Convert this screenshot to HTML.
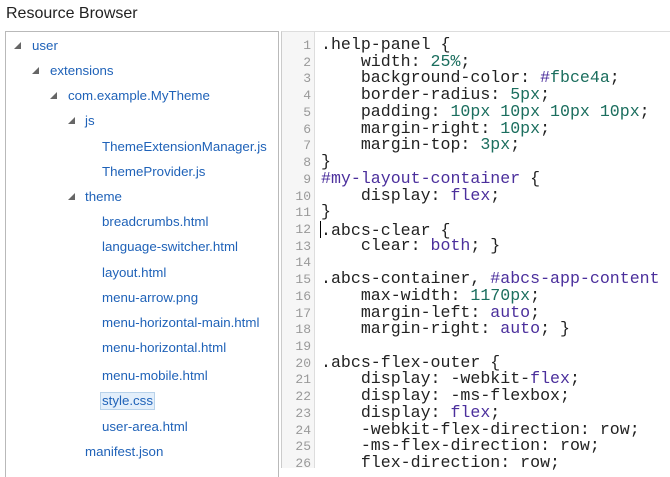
<!DOCTYPE html>
<html><head><style>
body{margin:0;width:670px;height:467px;overflow:hidden;background:#fff;font-family:"Liberation Sans",sans-serif;position:relative}
.title{position:absolute;left:6px;top:5px;font-size:16px;color:#222}
.tree{position:absolute;left:5px;top:31px;width:272px;height:445px;border:1px solid #b9b9b9;border-bottom:none}
.it{position:absolute;font-size:13.3px;color:#1f62b8;white-space:nowrap;line-height:16px}
.tri{position:absolute;width:0;height:0;border-left:7px solid transparent;border-bottom:7px solid #666}
.sel{background:#e3effb;border:1px solid #b8d2ea;padding:0 1px;margin-left:-2px}
.code{position:absolute;left:281px;top:31px;width:389px;height:436px;border-top:1px solid #ddd;border-left:1px solid #ccc;background:#fff}
.gut{position:absolute;left:0;top:0;width:32px;height:436px;background:#f6f6f6;border-right:1px solid #ddd}
.ln{position:absolute;left:0;width:29px;text-align:right;font-family:"Liberation Mono",monospace;font-size:13px;color:#999}
.cl{position:absolute;left:39px;font-family:"Liberation Mono",monospace;font-size:16.6px;color:#222;white-space:pre;line-height:16px}
.n{color:#1b6e5e}.p{color:#4b2f9c}
.cur{display:inline-block;width:1px;height:17px;background:#000;vertical-align:-3px;margin-left:-1px}
</style></head><body>
<div class="title">Resource Browser</div>
<div class="tree"></div>
<div class="tri" style="left:14px;top:42px"></div><div class="it" style="left:32px;top:38px">user</div>
<div class="tri" style="left:32px;top:67px"></div><div class="it" style="left:50px;top:63px">extensions</div>
<div class="tri" style="left:50px;top:92px"></div><div class="it" style="left:68px;top:88px">com.example.MyTheme</div>
<div class="tri" style="left:68px;top:117px"></div><div class="it" style="left:85px;top:113px">js</div>
<div class="it" style="left:102px;top:139px">ThemeExtensionManager.js</div>
<div class="it" style="left:102px;top:164px">ThemeProvider.js</div>
<div class="tri" style="left:68px;top:193px"></div><div class="it" style="left:85px;top:189px">theme</div>
<div class="it" style="left:102px;top:214px">breadcrumbs.html</div>
<div class="it" style="left:102px;top:239px">language-switcher.html</div>
<div class="it" style="left:102px;top:265px">layout.html</div>
<div class="it" style="left:102px;top:290px">menu-arrow.png</div>
<div class="it" style="left:102px;top:315px">menu-horizontal-main.html</div>
<div class="it" style="left:102px;top:340px">menu-horizontal.html</div>
<div class="it" style="left:102px;top:368px">menu-mobile.html</div>
<div class="it sel" style="left:102px;top:392px">style.css</div>
<div class="it" style="left:102px;top:419px">user-area.html</div>
<div class="it" style="left:85px;top:444px">manifest.json</div>
<div class="code"><div class="gut"></div>
<div class="ln" style="top:6px">1</div><div class="ln" style="top:22.7px">2</div><div class="ln" style="top:39.4px">3</div><div class="ln" style="top:56.2px">4</div><div class="ln" style="top:72.9px">5</div><div class="ln" style="top:89.6px">6</div><div class="ln" style="top:106.3px">7</div><div class="ln" style="top:123px">8</div><div class="ln" style="top:139.8px">9</div><div class="ln" style="top:156.5px">10</div><div class="ln" style="top:173.2px">11</div><div class="ln" style="top:189.9px">12</div><div class="ln" style="top:206.6px">13</div><div class="ln" style="top:223.4px">14</div><div class="ln" style="top:240.1px">15</div><div class="ln" style="top:256.8px">16</div><div class="ln" style="top:273.5px">17</div><div class="ln" style="top:290.2px">18</div><div class="ln" style="top:307px">19</div><div class="ln" style="top:323.7px">20</div><div class="ln" style="top:340.4px">21</div><div class="ln" style="top:357.1px">22</div><div class="ln" style="top:373.8px">23</div><div class="ln" style="top:390.6px">24</div><div class="ln" style="top:407.3px">25</div><div class="ln" style="top:424px">26</div>
<div class="cl" style="top:5px">.help-panel {</div>
<div class="cl" style="top:21.7px">    width: <span class="n">25%</span>;</div>
<div class="cl" style="top:38.4px">    background-color: <span class="p">#</span><span class="n">fbce4a</span>;</div>
<div class="cl" style="top:55.2px">    border-radius: <span class="n">5px</span>;</div>
<div class="cl" style="top:71.9px">    padding: <span class="n">10px 10px 10px 10px</span>;</div>
<div class="cl" style="top:88.6px">    margin-right: <span class="n">10px</span>;</div>
<div class="cl" style="top:105.3px">    margin-top: <span class="n">3px</span>;</div>
<div class="cl" style="top:122px">}</div>
<div class="cl" style="top:138.8px"><span class="p">#my-layout-container</span> {</div>
<div class="cl" style="top:155.5px">    display: <span class="p">flex</span>;</div>
<div class="cl" style="top:172.2px">}</div>
<div class="cl" style="top:188.9px"><span class="cur"></span>.abcs-clear {</div>
<div class="cl" style="top:205.6px">    clear: <span class="p">both</span>; }</div>
<div class="cl" style="top:239.1px">.abcs-container, <span class="p">#abcs-app-content</span></div>
<div class="cl" style="top:255.8px">    max-width: <span class="n">1170px</span>;</div>
<div class="cl" style="top:272.5px">    margin-left: <span class="p">auto</span>;</div>
<div class="cl" style="top:289.2px">    margin-right: <span class="p">auto</span>; }</div>
<div class="cl" style="top:322.7px">.abcs-flex-outer {</div>
<div class="cl" style="top:339.4px">    display: -webkit-<span class="p">flex</span>;</div>
<div class="cl" style="top:356.1px">    display: -ms-flexbox;</div>
<div class="cl" style="top:372.8px">    display: <span class="p">flex</span>;</div>
<div class="cl" style="top:389.6px">    -webkit-flex-direction: row;</div>
<div class="cl" style="top:406.3px">    -ms-flex-direction: row;</div>
<div class="cl" style="top:423px">    flex-direction: row;</div>
</div>
</body></html>
